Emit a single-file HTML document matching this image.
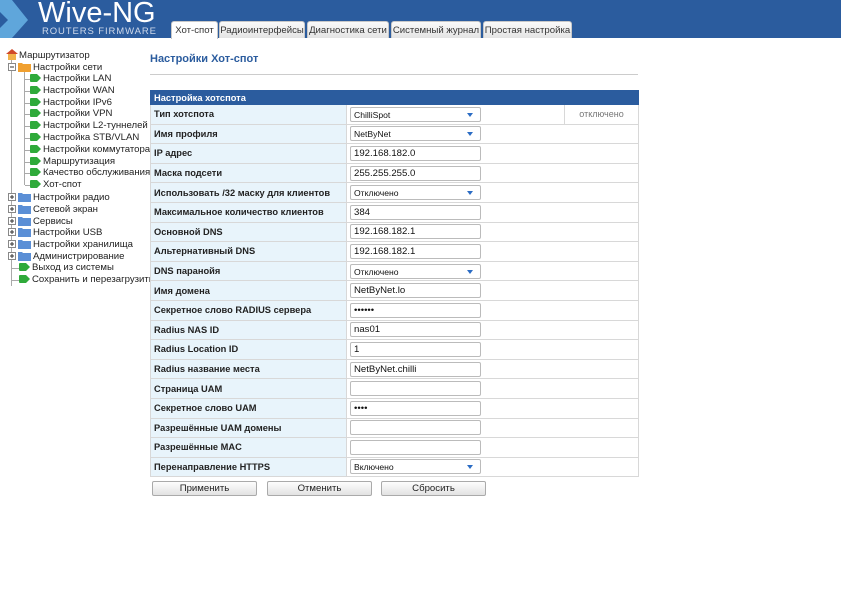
<!DOCTYPE html>
<html><head><meta charset="utf-8"><style>
*{box-sizing:border-box;margin:0;padding:0}
body{width:841px;height:600px;background:#fff;font-family:"Liberation Sans",Arial,sans-serif;position:relative;overflow:hidden}
#hdr{position:absolute;left:0;top:0;width:841px;height:38px;background:#2b5c9e}
.logo1{position:absolute;left:38px;top:-3px;color:#fff;font-size:29px;line-height:32px}
.logo2{position:absolute;left:42px;top:26px;color:#cfd9ea;font-size:9.5px;line-height:11px;letter-spacing:0.9px}
.tab{position:absolute;top:21px;height:17px;background:linear-gradient(#fafafa,#e4e4e4);border:1px solid #c8c8c8;border-bottom:none;border-radius:3px 3px 0 0;font-size:9.6px;color:#333;padding:3px 0 0 0;text-align:center;white-space:nowrap;overflow:hidden}
.tab.a{background:#fff;height:18px}
.tree{position:absolute;left:0;top:49px;font-size:9.6px;color:#222}
.ti{position:absolute;white-space:nowrap;height:12px;line-height:12px}
.ln{position:absolute;background:#aaa}
.ico{display:inline-block;vertical-align:-2px;margin-right:1px}
h1{position:absolute;left:150px;top:53px;font-size:11px;color:#2b5c9e;font-weight:bold}
.hr{position:absolute;left:150px;top:74px;width:488px;height:1px;background:#ccc}
table{position:absolute;left:150px;top:90px;width:488px;border-collapse:collapse;font-size:9.3px;table-layout:fixed}
td{border:1px solid #d8d8d8;height:19.6px;padding:0 3px;white-space:nowrap;overflow:hidden}
th{background:#2b5c9e;color:#fff;text-align:left;height:14px;font-size:9.3px;padding:0 3px;border:1px solid #2b5c9e}
td.l{background:#e8f4fb;font-weight:bold;color:#222}
.in{display:block;width:131px;height:15px;border:1px solid #bbb;border-radius:2px;font-size:9.6px;line-height:12px;padding:1px 3px;background:#fff;color:#111;position:relative}
.in.s{font-size:8.6px}
.in.s:after{content:"";position:absolute;right:7px;top:5px;border-left:3.5px solid transparent;border-right:3.5px solid transparent;border-top:4px solid #2b6cc4}
.st{color:#777;text-align:center;font-size:9px}
.btn{position:absolute;top:481px;width:105px;height:15px;border:1px solid #aaa;border-radius:2px;background:linear-gradient(#fdfdfd,#e2e2e2);font-size:9.6px;text-align:center;line-height:13px;color:#222}
</style></head><body>
<div id="hdr">
<svg style="position:absolute;left:0;top:0" width="30" height="38"><polygon points="0,0 12,0 28,20 12,38 0,38 0,28 8,20 0,12" fill="#5fa6db"/></svg>
<div class="logo1">Wive-NG</div>
<div class="logo2">ROUTERS FIRMWARE</div>
<div class="tab a" style="left:171px;width:47px">Хот-спот</div>
<div class="tab" style="left:219px;width:86px">Радиоинтерфейсы</div>
<div class="tab" style="left:307px;width:82px">Диагностика сети</div>
<div class="tab" style="left:391px;width:90px">Системный журнал</div>
<div class="tab" style="left:483px;width:89px">Простая настройка</div>
</div>
<div class="tree">
<div class="ln" style="left:11px;top:11px;width:1px;height:226px"></div>
<div class="ln" style="left:24px;top:20px;width:1px;height:116px"></div>
<div class="ti" style="left:6px;top:0"><svg class="ico" width="12" height="11"><polygon points="6,0 12,5 0,5" fill="#d04a2a"/><rect x="2" y="5" width="8" height="6" fill="#f2b24a"/></svg>Маршрутизатор</div>
<div class="ti" style="left:8px;top:12px"><svg class="ico" width="24" height="11"><rect x="0.5" y="2.5" width="7" height="7" fill="#fff" stroke="#888"/><line x1="2" y1="6" x2="6" y2="6" stroke="#333"/><path d="M10 2h4l1 1h8v8H10z" fill="#f0a030"/></svg>Настройки сети</div>
<div id="leaves"></div>
</div>
<h1>Настройки Хот-спот</h1>
<div class="hr"></div>
<table>
<colgroup><col style="width:196px"><col style="width:218px"><col style="width:74px"></colgroup>
<tr><th colspan="3">Настройка хотспота</th></tr>
<tr><td class="l">Тип хотспота</td><td><span class="in s">ChilliSpot</span></td><td class="st">отключено</td></tr>
<tr><td class="l">Имя профиля</td><td colspan="2"><span class="in s">NetByNet</span></td></tr>
<tr><td class="l">IP адрес</td><td colspan="2"><span class="in">192.168.182.0</span></td></tr>
<tr><td class="l">Маска подсети</td><td colspan="2"><span class="in">255.255.255.0</span></td></tr>
<tr><td class="l">Использовать /32 маску для клиентов</td><td colspan="2"><span class="in s">Отключено</span></td></tr>
<tr><td class="l">Максимальное количество клиентов</td><td colspan="2"><span class="in">384</span></td></tr>
<tr><td class="l">Основной DNS</td><td colspan="2"><span class="in">192.168.182.1</span></td></tr>
<tr><td class="l">Альтернативный DNS</td><td colspan="2"><span class="in">192.168.182.1</span></td></tr>
<tr><td class="l">DNS паранойя</td><td colspan="2"><span class="in s">Отключено</span></td></tr>
<tr><td class="l">Имя домена</td><td colspan="2"><span class="in">NetByNet.lo</span></td></tr>
<tr><td class="l">Секретное слово RADIUS сервера</td><td colspan="2"><span class="in">••••••</span></td></tr>
<tr><td class="l">Radius NAS ID</td><td colspan="2"><span class="in">nas01</span></td></tr>
<tr><td class="l">Radius Location ID</td><td colspan="2"><span class="in">1</span></td></tr>
<tr><td class="l">Radius название места</td><td colspan="2"><span class="in">NetByNet.chilli</span></td></tr>
<tr><td class="l">Страница UAM</td><td colspan="2"><span class="in"></span></td></tr>
<tr><td class="l">Секретное слово UAM</td><td colspan="2"><span class="in">••••</span></td></tr>
<tr><td class="l">Разрешённые UAM домены</td><td colspan="2"><span class="in"></span></td></tr>
<tr><td class="l">Разрешённые MAC</td><td colspan="2"><span class="in"></span></td></tr>
<tr><td class="l">Перенаправление HTTPS</td><td colspan="2"><span class="in s">Включено</span></td></tr>
</table>
<div class="btn" style="left:152px">Применить</div>
<div class="btn" style="left:267px">Отменить</div>
<div class="btn" style="left:381px">Сбросить</div>
<script>
var g='<svg class="ico" width="13" height="10"><path d="M1 2Q1 1 2 1H8L12 5L8 9H2Q1 9 1 8Z" fill="#2faa3a"/></svg>';
var f='<svg class="ico" width="24" height="11"><rect x="0.5" y="2.5" width="7" height="7" fill="#fff" stroke="#888"/><line x1="2" y1="6" x2="6" y2="6" stroke="#333"/><line x1="4" y1="4" x2="4" y2="8" stroke="#333"/><path d="M10 2h4l1 1h8v8H10z" fill="#5b8fd6"/></svg>';
var L=["Настройки LAN","Настройки WAN","Настройки IPv6","Настройки VPN","Настройки L2-туннелей","Настройка STB/VLAN","Настройки коммутатора","Маршрутизация","Качество обслуживания","Хот-спот"];
var F=["Настройки радио","Сетевой экран","Сервисы","Настройки USB","Настройки хранилища","Администрирование"];
var h='',y=24;
L.forEach(function(t){h+='<div class="ln" style="left:25px;top:'+(y+6)+'px;width:7px;height:1px"></div><div class="ti" style="left:29px;top:'+y+'px">'+g+t+'</div>';y+=11.8;});
F.forEach(function(t){h+='<div class="ti" style="left:8px;top:'+y+'px">'+f+t+'</div>';y+=11.8;});
["Выход из системы","Сохранить и перезагрузить"].forEach(function(t){h+='<div class="ln" style="left:12px;top:'+(y+6)+'px;width:8px;height:1px"></div><div class="ti" style="left:18px;top:'+y+'px">'+g+t+'</div>';y+=11.8;});
document.getElementById('leaves').outerHTML=h;
</script>
</body></html>
